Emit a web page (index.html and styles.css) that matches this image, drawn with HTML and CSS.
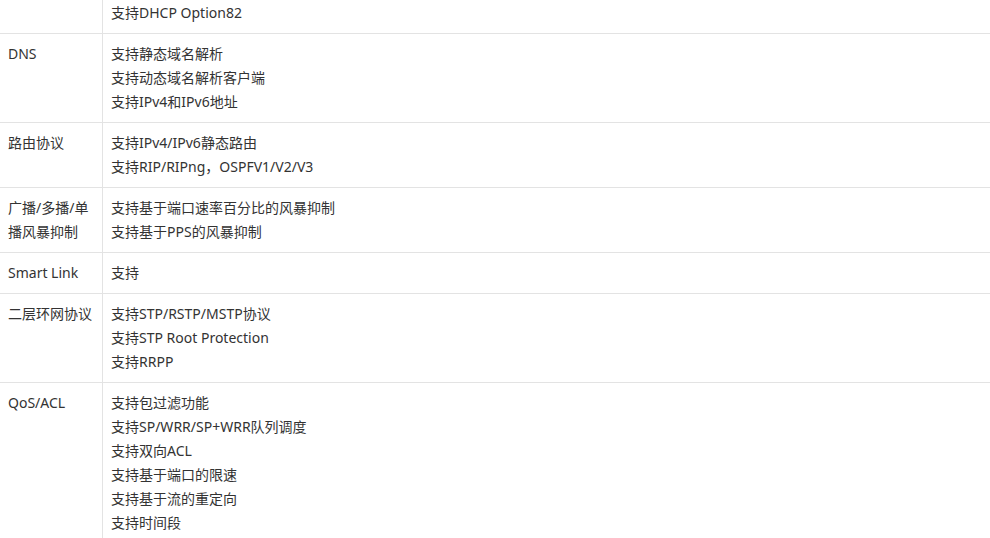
FILE: index.html
```html
<!DOCTYPE html>
<html lang="zh-CN">
<head>
<meta charset="utf-8">
<title>规格参数</title>
<link rel="stylesheet" href="styles.css">
</head>
<body>
<table class="spec">
  <colgroup><col class="c-name"><col class="c-val"></colgroup>
  <tbody>
    <tr>
      <td class="name"></td>
      <td class="val"><div>支持DHCP Option82</div></td>
    </tr>
    <tr>
      <td class="name">DNS</td>
      <td class="val"><div>支持静态域名解析</div><div>支持动态域名解析客户端</div><div>支持IPv4和IPv6地址</div></td>
    </tr>
    <tr>
      <td class="name">路由协议</td>
      <td class="val"><div>支持IPv4/IPv6静态路由</div><div>支持RIP/RIPng，OSPFV1/V2/V3</div></td>
    </tr>
    <tr>
      <td class="name">广播/多播/单播风暴抑制</td>
      <td class="val"><div>支持基于端口速率百分比的风暴抑制</div><div>支持基于PPS的风暴抑制</div></td>
    </tr>
    <tr>
      <td class="name">Smart Link</td>
      <td class="val"><div>支持</div></td>
    </tr>
    <tr>
      <td class="name">二层环网协议</td>
      <td class="val"><div>支持STP/RSTP/MSTP协议</div><div>支持STP Root Protection</div><div>支持RRPP</div></td>
    </tr>
    <tr>
      <td class="name">QoS/ACL</td>
      <td class="val"><div>支持包过滤功能</div><div>支持SP/WRR/SP+WRR队列调度</div><div>支持双向ACL</div><div>支持基于端口的限速</div><div>支持基于流的重定向</div><div>支持时间段</div></td>
    </tr>
  </tbody>
</table>
</body>
</html>
```

FILE: styles.css
```css
html, body {
  margin: 0;
  padding: 0;
  background: #fff;
}

body {
  font-family: "Noto Sans", "Noto Sans CJK SC", sans-serif;
  font-size: 14px;
  line-height: 24px;
  color: #333;
  overflow: hidden;
}

.spec {
  width: 990px;
  margin-top: -7px;
  table-layout: fixed;
  border-collapse: separate;
  border-spacing: 0;
}

.c-name { width: 103px; }

.spec td {
  vertical-align: top;
  padding: 8px 8px;
  border-bottom: 1px solid #e3e3e3;
}

.spec td.name {
  border-right: 1px solid #e3e3e3;
  padding-right: 10px;
}

.spec td.val {
  padding-left: 8px;
}
```
